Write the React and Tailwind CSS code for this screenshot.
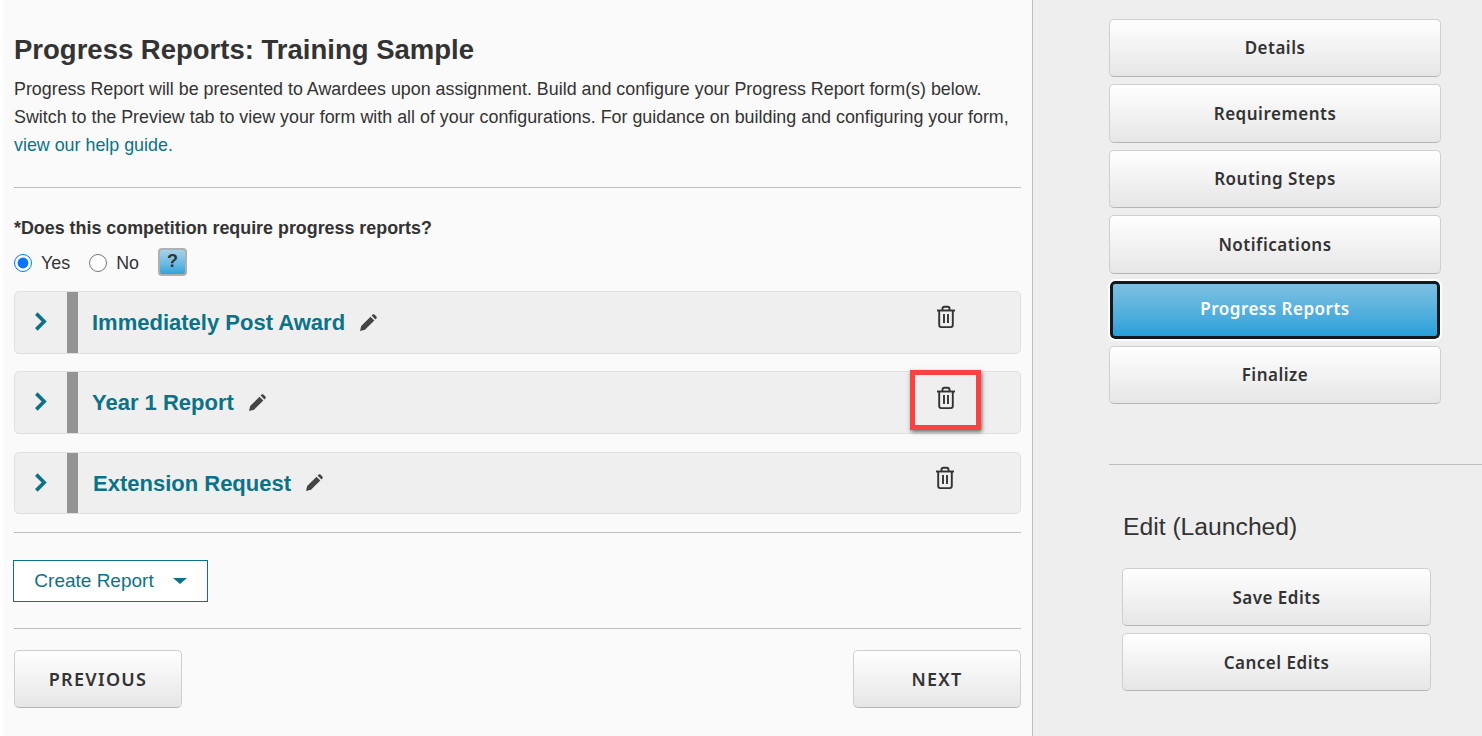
import React from 'react';

const SIDE_BUTTONS = ['Details', 'Requirements', 'Routing Steps', 'Notifications', 'Progress Reports', 'Finalize'];

const BTN_FONT = "font-['Noto_Sans',sans-serif] font-semibold";

function Pencil() {
  return (
    <svg viewBox="0 0 20 20" className="w-[20px] h-[20px] shrink-0">
      <path d="M2 18l1.2-5L12.5 3.7l3.8 3.8L7 16.8 2 18z" fill="#444" />
      <path d="M13.6 2.6l1-1a1.3 1.3 0 0 1 1.8 0l2 2a1.3 1.3 0 0 1 0 1.8l-1 1-3.8-3.8z" fill="#444" />
    </svg>
  );
}

function Trash() {
  return (
    <svg viewBox="0 0 20 24" fill="none" stroke="#333" strokeWidth="1.9" className="w-[20px] h-[24px]">
      <path d="M1 5.5h18" />
      <path d="M6.5 5V3.4c0-1 .8-1.6 1.7-1.6h3.6c.9 0 1.7.6 1.7 1.6V5" />
      <path d="M3.2 5.5v14.6c0 1.2.8 2 2 2h9.6c1.2 0 2-.8 2-2V5.5" />
      <path d="M8 9v9M12 9v9" />
    </svg>
  );
}

function ReportRow({ title, highlight, className, titleClass, trashClass }) {
  return (
    <div className={`relative flex items-stretch bg-[#efefef] border border-[#e0e0e0] rounded-[5px] ${className}`}>
      <div className="w-[52px] flex items-center justify-center">
        <svg viewBox="0 0 14 20" className="w-[15px] h-[21px] -translate-y-[1px] -translate-x-[1px]" fill="none" stroke="#0b7287" strokeWidth="3.4">
          <path d="M3 2.5l7.5 7.5L3 17.5" />
        </svg>
      </div>
      <div className="w-[11px] bg-[#949494]" />
      <div className={`flex-1 flex items-center gap-[13px] ${titleClass}`}>
        <span className="text-[22px] font-bold text-[#0b7287]">{title}</span>
        <Pencil />
      </div>
      <div className={`w-[150px] flex items-start ${trashClass}`}>
        <Trash />
      </div>
      {highlight && (
        <div className="absolute left-[895px] top-[-2px] w-[71px] h-[60px] border-[5px] border-[#fb4242] shadow-[1px_2px_4px_rgba(0,0,0,0.55)]" />
      )}
    </div>
  );
}

function GrayButton({ children, className }) {
  return (
    <button className={`flex items-center justify-center bg-gradient-to-b from-[#ffffff] to-[#e6e6e6] border border-[#cfcfcf] border-b-[#b5b5b5] rounded-[5px] text-[#333] ${BTN_FONT} ${className}`}>
      {children}
    </button>
  );
}

export default function App() {
  return (
    <div className="h-[736px] overflow-hidden flex bg-white font-['Liberation_Sans',Arial,sans-serif] text-[#333]">
      {/* main column */}
      <div className="w-[1030px] ml-[3px] bg-[#fafafa] border-r border-[#bdbdbd] pl-[11px] pr-[11px]">
        <h1 className="pt-[33px] text-[27.5px] leading-[33px] font-bold text-[#333]">Progress Reports: Training Sample</h1>
        <p className="mt-[9px] text-[17.87px] leading-[28px]">
          Progress Report will be presented to Awardees upon assignment. Build and configure your Progress Report form(s) below.
          <br />
          Switch to the Preview tab to view your form with all of your configurations. For guidance on building and configuring your form,
          <br />
          <span className="text-[#0b7287]">view our help guide.</span>
        </p>
        <hr className="mt-[28px] border-[#bdbdbd]" />

        <div className="mt-[30px] text-[17.87px] leading-[20px] font-bold">*Does this competition require progress reports?</div>
        <div className="mt-[11px] h-[28px] flex items-center text-[17.87px]">
          <input type="radio" name="req" defaultChecked className="w-[18px] h-[18px] m-0 accent-[#0075ff]" />
          <span className="ml-[9px]">Yes</span>
          <input type="radio" name="req" className="w-[18px] h-[18px] m-0 ml-[19px]" />
          <span className="ml-[9px]">No</span>
          <div className="ml-[19px] -mt-[3px] w-[29px] h-[28px] flex items-center justify-center rounded-[4px] border-2 border-[#b0b0b0] bg-gradient-to-b from-[#a5d3ea] to-[#2ca5dc] text-[18px] font-bold text-[#333]">?</div>
        </div>

        <ReportRow title="Immediately Post Award" className="mt-[14px] h-[63px]" titleClass="pl-[14px]" trashClass="pl-[66px] pt-[13px]" />
        <ReportRow title="Year 1 Report" highlight className="mt-[17px] h-[63px]" titleClass="pl-[14px]" trashClass="pl-[66px] pt-[14px]" />
        <ReportRow title="Extension Request" className="mt-[18px] h-[62px]" titleClass="pl-[15px]" trashClass="pl-[65px] pt-[13px]" />

        <hr className="mt-[18px] border-[#bdbdbd]" />

        <button className="mt-[27px] -ml-[1px] w-[195px] h-[42px] flex items-center justify-center gap-[19px] bg-white border border-[#0b7287] text-[#0b7287] text-[19px]">
          Create Report
          <span className="w-0 h-0 border-x-[7px] border-x-transparent border-t-[6px] border-t-[#0b7287]" />
        </button>

        <hr className="mt-[26px] border-[#bdbdbd]" />

        <div className="mt-[21px] flex justify-between">
          <GrayButton className="w-[168px] h-[58px] text-[18px] tracking-[1.3px]">PREVIOUS</GrayButton>
          <GrayButton className="w-[168px] h-[58px] text-[18px] tracking-[1.3px]">NEXT</GrayButton>
        </div>
      </div>

      {/* right column */}
      <div className="flex-1 bg-[#eeeeee] pt-[19px]">
        <div className="ml-[76px] w-[332px] flex flex-col gap-[7px]">
          {SIDE_BUTTONS.map(label =>
            label === 'Progress Reports' ? (
              <button
                key={label}
                className={`h-[58.4px] mx-[1px] pb-[2px] flex items-center justify-center rounded-[5px] border-[3px] border-[#14181c] outline-2 outline-white bg-gradient-to-b from-[#7cc1e0] to-[#24a0da] text-white text-[17px] tracking-[0.5px] ${BTN_FONT}`}
              >
                {label}
              </button>
            ) : (
              <GrayButton key={label} className="h-[58.4px] text-[17px] tracking-[0.5px]">{label}</GrayButton>
            )
          )}
        </div>
        <hr className="mt-[60px] ml-[76px] border-[#bdbdbd]" />
        <div className="mt-[47px] ml-[90px] text-[24.7px] leading-[30px] text-[#333]">Edit (Launched)</div>
        <div className="mt-[26px] ml-[89px] w-[309px] flex flex-col gap-[7px]">
          <GrayButton className="h-[58px] text-[17px] tracking-[0.5px]">Save Edits</GrayButton>
          <GrayButton className="h-[58px] text-[17px] tracking-[0.5px]">Cancel Edits</GrayButton>
        </div>
      </div>
    </div>
  );
}
